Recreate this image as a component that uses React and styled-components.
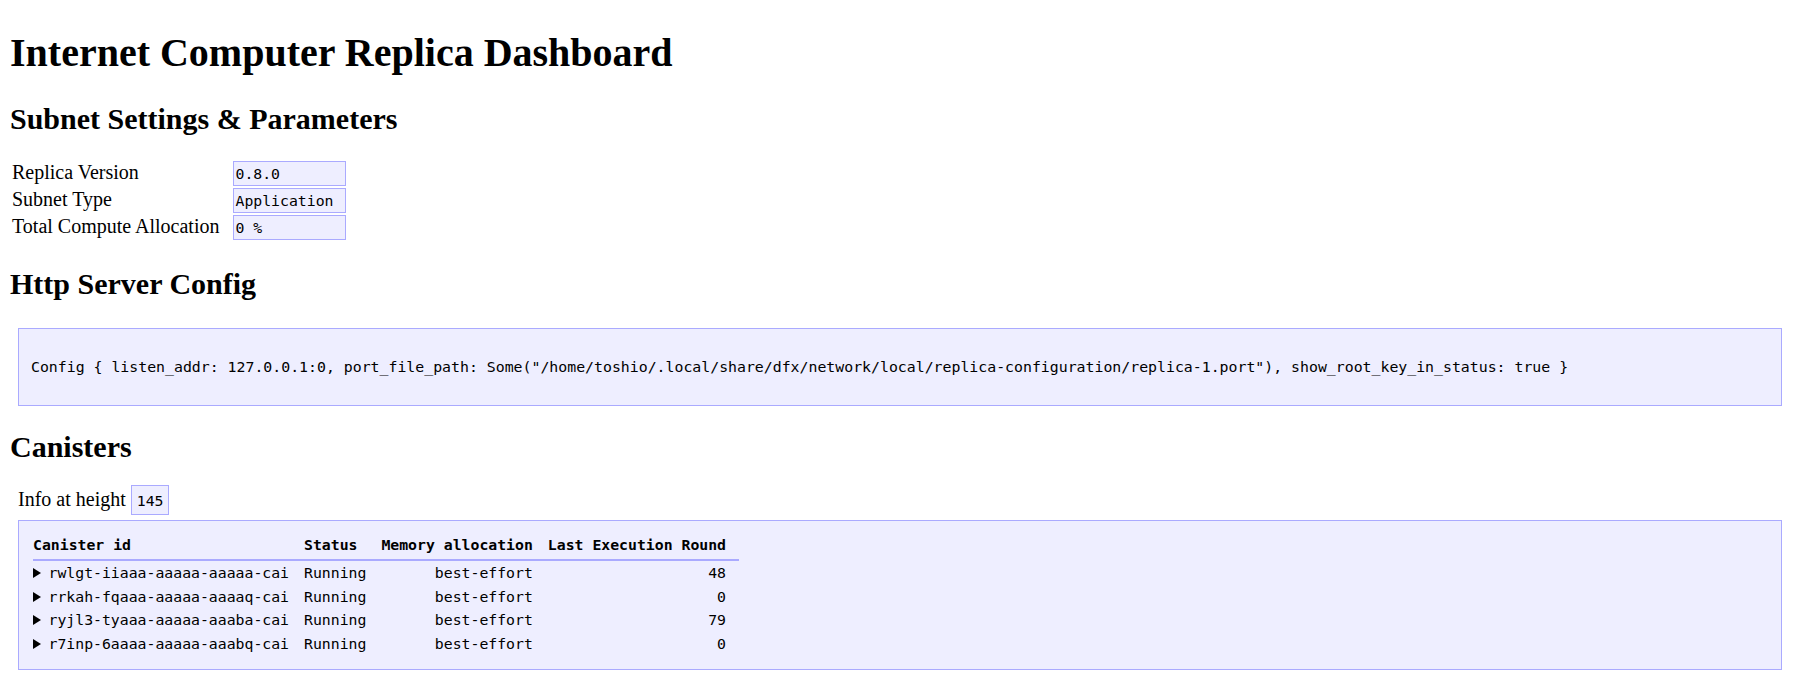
import styled, { createGlobalStyle } from "styled-components";

const GlobalStyle = createGlobalStyle`
  body {
    margin: 0;
    background: #fff;
    color: #000;
    font-family: "Liberation Serif", "Times New Roman", serif;
    font-size: 20px;
  }
`;

const mono = `"DejaVu Sans Mono", "Liberation Mono", monospace`;

const params = [
  { label: "Replica Version", value: "0.8.0" },
  { label: "Subnet Type", value: "Application" },
  { label: "Total Compute Allocation", value: "0 %" },
];

const canisters = [
  { id: "rwlgt-iiaaa-aaaaa-aaaaa-cai", status: "Running", memory: "best-effort", round: 48 },
  { id: "rrkah-fqaaa-aaaaa-aaaaq-cai", status: "Running", memory: "best-effort", round: 0 },
  { id: "ryjl3-tyaaa-aaaaa-aaaba-cai", status: "Running", memory: "best-effort", round: 79 },
  { id: "r7inp-6aaaa-aaaaa-aaabq-cai", status: "Running", memory: "best-effort", round: 0 },
];

const configText =
  'Config { listen_addr: 127.0.0.1:0, port_file_path: Some("/home/toshio/.local/share/dfx/network/local/replica-configuration/replica-1.port"), show_root_key_in_status: true }';

const App = () => {
  return (
    <Page>
      <GlobalStyle />
      <Title>Internet Computer Replica Dashboard</Title>

      <SectionTitle>Subnet Settings &amp; Parameters</SectionTitle>
      <ParamTable>
        <tbody>
          {params.map((p) => (
            <tr key={p.label}>
              <ParamLabel>{p.label}</ParamLabel>
              <ParamValue>{p.value}</ParamValue>
            </tr>
          ))}
        </tbody>
      </ParamTable>

      <SectionTitle>Http Server Config</SectionTitle>
      <ConfigBox>{configText}</ConfigBox>

      <SectionTitle>Canisters</SectionTitle>
      <Indented>
        <InfoLine>
          Info at height <HeightBadge>145</HeightBadge>
        </InfoLine>
        <CanisterBox>
          <CanisterTable>
            <thead>
              <tr>
                <HeadCell>Canister id</HeadCell>
                <HeadCell>Status</HeadCell>
                <HeadCell>Memory allocation</HeadCell>
                <HeadCell>Last Execution Round</HeadCell>
              </tr>
            </thead>
            <tbody>
              {canisters.map((c) => (
                <tr key={c.id}>
                  <Cell>
                    <Marker />
                    {c.id}
                  </Cell>
                  <Cell>{c.status}</Cell>
                  <Cell $align="right">{c.memory}</Cell>
                  <Cell $align="right">{c.round}</Cell>
                </tr>
              ))}
            </tbody>
          </CanisterTable>
        </CanisterBox>
      </Indented>
    </Page>
  );
};

const Page = styled.div`
  display: flow-root;
  padding: 0 10px;
`;

const Title = styled.h1`
  font-size: 40px;
  font-weight: bold;
  line-height: 46px;
  margin: 29.5px 0 26.8px;
`;

const SectionTitle = styled.h2`
  font-size: 30px;
  font-weight: bold;
  line-height: 34.5px;
  margin: 24.9px 0;
`;

const ParamTable = styled.table`
  border-spacing: 2.5px;
  margin-top: -2.5px;
  margin-bottom: 2px;
  td {
    vertical-align: baseline;
  }
`;

const ParamLabel = styled.td`
  padding: 0 12px 0 0;
  white-space: nowrap;
`;

const ParamValue = styled.td`
  box-sizing: border-box;
  width: 113px;
  padding: 2px 1px;
  border: 1px solid #aaaaff;
  background: #eeeeff;
  font-family: ${mono};
  font-size: 14.8px;
  line-height: 19px;
  white-space: pre;
`;

const Indented = styled.div`
  margin: -2px 8px 10px;
`;

const ConfigBox = styled.div`
  margin: 26px 8px 0;
  padding: 30px 12px 29px;
  border: 1px solid #aaaaff;
  background: #eeeeff;
  font-family: ${mono};
  font-size: 14.85px;
  line-height: 17px;
  white-space: pre;
`;

const InfoLine = styled.div`
  line-height: 23px;
`;

const HeightBadge = styled.span`
  padding: 6px 5px 5px;
  border: 1px solid #aaaaff;
  background: #eeeeff;
  font-family: ${mono};
  font-size: 14.8px;
`;

const CanisterBox = styled.div`
  margin-top: 8px;
  padding: 12px 14px 13px;
  border: 1px solid #aaaaff;
  background: #eeeeff;
`;

const CanisterTable = styled.table`
  border-spacing: 0;
  font-family: ${mono};
  font-size: 14.8px;
  line-height: 23.7px;
`;

const HeadCell = styled.th`
  padding: 0 15px 2.3px 0;
  border-bottom: 2px solid #aaaaff;
  text-align: left;
  font-weight: bold;
  white-space: nowrap;

  &:last-child {
    padding-right: 13px;
  }
`;

const Cell = styled.td`
  padding: 0 15px 0 0;
  text-align: ${(p) => p.$align || "left"};
  white-space: nowrap;

  &:last-child {
    padding-right: 13px;
  }
`;

const Marker = styled.span`
  display: inline-block;
  width: 0;
  height: 0;
  margin-right: 7.5px;
  border-left: 8.5px solid #000;
  border-top: 5px solid transparent;
  border-bottom: 5px solid transparent;
`;

export default App;
